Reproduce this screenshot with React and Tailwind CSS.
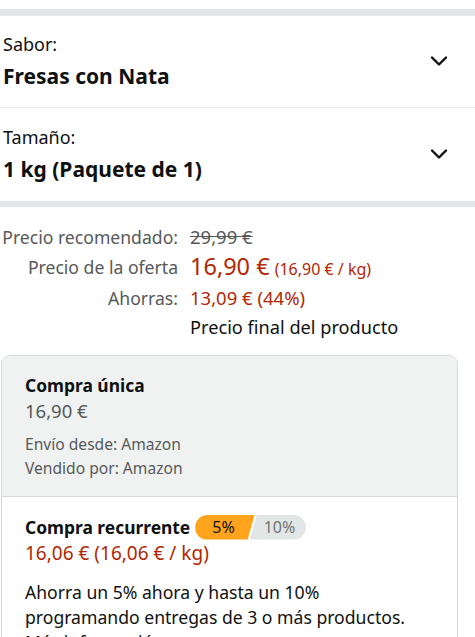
import React from "react";

const Chevron = () => (
  <svg width="18" height="12" viewBox="0 0 18 12" fill="none">
    <path d="M2 2.5 L9 9.5 L16 2.5" stroke="#0f1111" strokeWidth="2.4" strokeLinecap="round" strokeLinejoin="round" />
  </svg>
);

const Selector = ({ label, value, top, bottom }) => (
  <div className={`flex items-center justify-between pl-[3px] pr-[27px] ${top} ${bottom}`}>
    <div className="flex flex-col gap-[6px]">
      <div className="h-[24px] leading-[24px] text-[18px] text-[#0f1111]">{label}</div>
      <div className="h-[28px] leading-[28px] text-[21px] font-bold text-[#0f1111]">{value}</div>
    </div>
    <Chevron />
  </div>
);

const PriceRow = ({ label, children, h }) => (
  <div className={`flex items-center ${h}`}>
    <div className="w-[178px] shrink-0 whitespace-nowrap text-right text-[17.6px] text-[#565959]">{label}</div>
    <div className="pl-[12px] flex items-baseline whitespace-nowrap">{children}</div>
  </div>
);

export default function App() {
  return (
    <div
      className="w-[475px] h-[637px] overflow-hidden bg-white"
      style={{ fontFamily: '"Noto Sans", "Open Sans", sans-serif' }}
    >
      <div className="h-[9px]" />
      <div className="h-[7px] bg-[#e3e6e6]" />

      <Selector label="Sabor:" value="Fresas con Nata" top="pt-[16px]" bottom="pb-[17px]" />
      <div className="h-px bg-[#e7e9e9]" />
      <Selector label="Tamaño:" value="1 kg (Paquete de 1)" top="pt-[17px]" bottom="pb-[18px]" />
      <div className="h-[6px] bg-[#e3e6e6]" />

      <div className="pt-[16px]">
        <PriceRow label="Precio recomendado:" h="h-[28px]">
          <span className="text-[18.5px] text-[#565959] line-through">29,99 €</span>
        </PriceRow>
        <PriceRow label="Precio de la oferta" h="h-[32px]">
          <span className="text-[23.5px] text-[#b12704]">16,90 €</span>
          <span className="ml-[5px] text-[16px] text-[#b12704]">(16,90 € / kg)</span>
        </PriceRow>
        <PriceRow label="Ahorras:" h="h-[30px]">
          <span className="text-[18.5px] text-[#b12704]">13,09 € (44%)</span>
        </PriceRow>
        <PriceRow label="" h="h-[30px]">
          <span className="text-[18.2px] text-[#0f1111]">Precio final del producto</span>
        </PriceRow>
      </div>

      <div className="mt-[12px] ml-px w-[457px] rounded-t-[9px] border border-[#d5d9d9] border-b-0 overflow-hidden">
        <div className="bg-[#f0f2f2] pl-[23px] pt-[16px] pb-[16px] border-b border-[#d5d9d9]">
          <div className="h-[26px] leading-[26px] text-[17.4px] font-bold text-[#0f1111]">Compra única</div>
          <div className="h-[26px] leading-[26px] text-[18.5px] text-[#565959]">16,90 €</div>
          <div className="mt-[8px] h-[24px] leading-[24px] text-[15.6px] text-[#565959]">Envío desde: Amazon</div>
          <div className="h-[24px] leading-[24px] text-[15.6px] text-[#565959]">Vendido por: Amazon</div>
        </div>
        <div className="bg-white pl-[23px] pt-[17px] pb-[20px]">
          <div className="flex items-center h-[26px]">
            <span className="text-[17.4px] font-bold text-[#0f1111]">Compra recurrente</span>
            <span className="ml-[5px] flex h-[25px] rounded-full overflow-hidden text-[16px]">
              <span className="flex items-center pl-[17px] pr-[20px] bg-[#ffa41c] text-[#0f1111] [clip-path:polygon(0_0,100%_0,calc(100%-7px)_100%,0_100%)]">
                5%
              </span>
              <span className="-ml-[5px] flex items-center pl-[14px] pr-[11px] bg-[#e3e6e6] text-[#6f7373] [clip-path:polygon(7px_0,100%_0,100%_100%,0_100%)]">
                10%
              </span>
            </span>
          </div>
          <div className="h-[26px] leading-[26px] text-[19px] text-[#b12704]">16,06 € (16,06 € / kg)</div>
          <div className="mt-[14px] text-[17.6px] leading-[25px] text-[#0f1111]">
            Ahorra un 5% ahora y hasta un 10%
            <br />
            programando entregas de 3 o más productos.
            <br />
            Más información
          </div>
        </div>
      </div>
    </div>
  );
}
